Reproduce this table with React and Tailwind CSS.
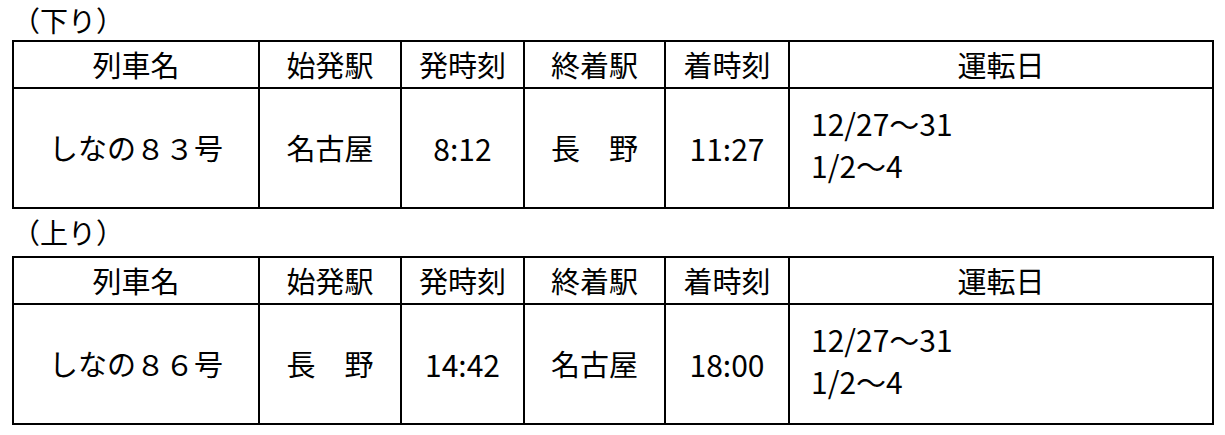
const cols = ["w-[246px]", "w-[142px]", "w-[123px]", "w-[141px]", "w-[124px]", "w-[424px]"];

const headers = ["列車名", "始発駅", "発時刻", "終着駅", "着時刻", "運転日"];

const Timetable = ({ row }) => (
  <table className="table-fixed border-collapse w-[1200px] text-black">
    <colgroup>
      {cols.map((c, i) => (
        <col key={i} className={c} />
      ))}
    </colgroup>
    <thead>
      <tr className="h-[47px]">
        {headers.map((h) => (
          <th key={h} className="border-2 border-black font-normal text-[29px] leading-none p-0 text-center">
            {h}
          </th>
        ))}
      </tr>
    </thead>
    <tbody>
      <tr className="h-[120px]">
        <td className="border-2 border-black text-[29px] text-center p-0">{row.name}</td>
        <td className="border-2 border-black text-[29px] text-center p-0">{row.from}</td>
        <td className="border-2 border-black text-[30px] text-center p-0">{row.dep}</td>
        <td className="border-2 border-black text-[29px] text-center p-0">{row.to}</td>
        <td className="border-2 border-black text-[30px] text-center p-0">{row.arr}</td>
        <td className="border-2 border-black text-[30px] leading-[42px] pl-[21px] pb-[8px] align-middle">
          <div>12/27〜31</div>
          <div>1/2〜4</div>
        </td>
      </tr>
    </tbody>
  </table>
);

export default function App() {
  return (
    <div className="bg-white w-[1225px] h-[435px] pl-[12px] font-['Noto_Sans_CJK_JP',sans-serif]">
      <div className="h-[40px] text-[28px] leading-[40px]">（下り）</div>
      <Timetable row={{ name: "しなの８３号", from: "名古屋", dep: "8:12", to: "長　野", arr: "11:27" }} />
      <div className="h-[47px] text-[28px] leading-[47px]">（上り）</div>
      <Timetable row={{ name: "しなの８６号", from: "長　野", dep: "14:42", to: "名古屋", arr: "18:00" }} />
    </div>
  );
}
